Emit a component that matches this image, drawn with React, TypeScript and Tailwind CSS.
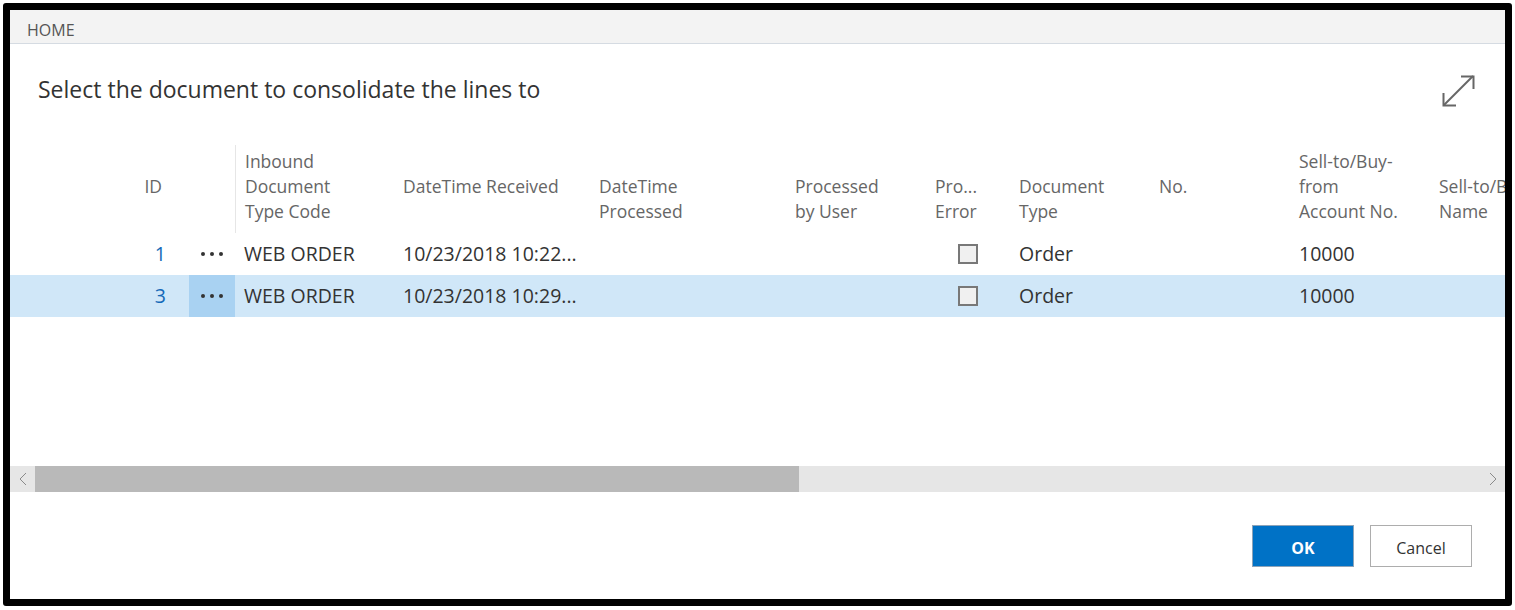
import React from "react";

const font = { fontFamily: '"Open Sans", "Noto Sans", Arial, sans-serif' };

type Col = { key: string; w: string; head: string[]; align?: "right" | "center" };

const cols: Col[] = [
  { key: "id", w: "w-[179px]", head: ["ID"], align: "right" },
  { key: "dots", w: "w-[46px]", head: [] },
  { key: "code", w: "w-[159px]", head: ["Inbound", "Document", "Type Code"] },
  { key: "recv", w: "w-[196px]", head: ["DateTime Received"] },
  { key: "proc", w: "w-[196px]", head: ["DateTime", "Processed"] },
  { key: "user", w: "w-[140px]", head: ["Processed", "by User"] },
  { key: "err", w: "w-[84px]", head: ["Pro...", "Error"] },
  { key: "type", w: "w-[140px]", head: ["Document", "Type"] },
  { key: "no", w: "w-[140px]", head: ["No."] },
  { key: "acct", w: "w-[140px]", head: ["Sell-to/Buy-", "from", "Account No."] },
  { key: "name", w: "w-[140px]", head: ["Sell-to/Buy-", "Name"] },
];

const rows = [
  { id: "1", code: "WEB ORDER", recv: "10/23/2018 10:22...", type: "Order", acct: "10000", selected: false },
  { id: "3", code: "WEB ORDER", recv: "10/23/2018 10:29...", type: "Order", acct: "10000", selected: true },
];

function ExpandIcon() {
  return (
    <svg width="33" height="32" viewBox="0 0 33 32" fill="none" stroke="#666" strokeWidth="2">
      <path d="M2 30 L31 1" />
      <path d="M19 1.5 H31.5 V14" />
      <path d="M1.5 18 V30.5 H14" />
    </svg>
  );
}

function Checkbox() {
  return <div className="w-[20px] h-[20px] border-2 border-[#787878] bg-[#f0f0f0]" />;
}

function Dots() {
  return (
    <div className="flex items-center gap-[5px]">
      <span className="w-[4px] h-[4px] rounded-full bg-[#333]" />
      <span className="w-[4px] h-[4px] rounded-full bg-[#333]" />
      <span className="w-[4px] h-[4px] rounded-full bg-[#333]" />
    </div>
  );
}

export default function App() {
  return (
    <div className="w-[1515px] h-[610px] bg-white p-[3px]" style={font}>
      <div className="w-[1509px] h-[603px] border-[7px] border-black rounded-[3px] flex flex-col overflow-hidden bg-white">
        {/* ribbon */}
        <div className="h-[34px] bg-[#f3f3f3] border-b border-[#d5dbe2] flex items-end pl-[17px] pb-[2px]">
          <span className="text-[16px] text-[#555] leading-[22px]">HOME</span>
        </div>

        {/* title */}
        <div className="h-[101px] flex justify-between items-start">
          <h1 className="pl-[28px] pt-[29px] text-[23px] leading-[32px] text-[#333]">
            Select the document to consolidate the lines to
          </h1>
          <div className="pt-[31px] pr-[30px]">
            <ExpandIcon />
          </div>
        </div>

        {/* table */}
        <div className="flex-1 flex flex-col overflow-hidden">
          <div className="flex h-[88px] shrink-0">
            {cols.map((c) => (
              <div
                key={c.key}
                className={[
                  c.w,
                  "shrink-0 flex flex-col justify-end text-[17.5px] leading-[25px] text-[#666] overflow-hidden whitespace-nowrap",
                  c.key === "code" ? "border-l border-[#e6e6e6] pl-[9px]" : "",
                  c.align === "right" ? "items-end pr-[27px]" : c.key !== "code" ? "pl-[9px]" : "",
                  c.head.length === 1 ? "pb-[34px]" : "pb-[9px]",
                ].join(" ")}
              >
                {c.head.map((h) => (
                  <div key={h}>{h}</div>
                ))}
              </div>
            ))}
          </div>

          {rows.map((r) => (
            <div key={r.id} className={`flex h-[42px] shrink-0 text-[19.5px] text-[#333] ${r.selected ? "bg-[#d0e7f8]" : ""}`}>
              <div className="w-[179px] shrink-0 flex items-center justify-end pr-[23px] text-[#1569b8]">{r.id}</div>
              <div className={`w-[46px] shrink-0 flex items-center justify-center ${r.selected ? "bg-[#a9d2f2]" : ""}`}>
                <Dots />
              </div>
              <div className="w-[159px] shrink-0 flex items-center pl-[9px] whitespace-nowrap">{r.code}</div>
              <div className="w-[196px] shrink-0 flex items-center pl-[9px] whitespace-nowrap">{r.recv}</div>
              <div className="w-[196px] shrink-0" />
              <div className="w-[140px] shrink-0" />
              <div className="w-[84px] shrink-0 flex items-center justify-center">
                <Checkbox />
              </div>
              <div className="w-[140px] shrink-0 flex items-center pl-[9px]">{r.type}</div>
              <div className="w-[140px] shrink-0" />
              <div className="w-[140px] shrink-0 flex items-center pl-[9px]">{r.acct}</div>
              <div className="flex-1" />
            </div>
          ))}
        </div>

        {/* horizontal scrollbar */}
        <div className="h-[26px] shrink-0 bg-[#e6e6e6] flex items-stretch">
          <div className="w-[25px] flex items-center justify-center">
            <svg width="8" height="14" viewBox="0 0 8 14" fill="none" stroke="#8a8a8a" strokeWidth="1">
              <path d="M7 1 L1 7 L7 13" />
            </svg>
          </div>
          <div className="w-[764px] bg-[#b9b9b9]" />
          <div className="flex-1" />
          <div className="w-[24px] flex items-center justify-center">
            <svg width="8" height="14" viewBox="0 0 8 14" fill="none" stroke="#8a8a8a" strokeWidth="1">
              <path d="M1 1 L7 7 L1 13" />
            </svg>
          </div>
        </div>

        {/* footer */}
        <div className="h-[107px] shrink-0 flex justify-end items-start gap-[16px] pt-[33px] pr-[33px]">
          <button className="w-[102px] h-[42px] pt-[4px] bg-[#0072c6] border border-[#8da3b8] text-white font-bold text-[16px]">
            OK
          </button>
          <button className="w-[102px] h-[42px] pt-[4px] bg-white border border-[#adadad] text-[#333] text-[16px]">
            Cancel
          </button>
        </div>
      </div>
    </div>
  );
}
